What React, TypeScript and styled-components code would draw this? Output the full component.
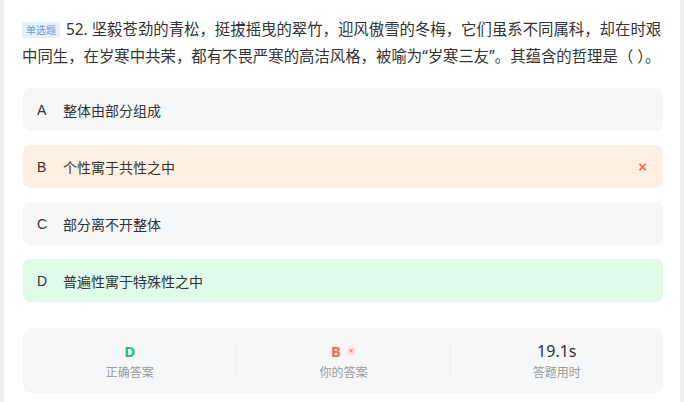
import React from 'react';
import styled, { createGlobalStyle } from 'styled-components';

const GlobalStyle = createGlobalStyle`
	html, body {
		margin: 0;
		padding: 0;
		background: #efeff0;
	}
	body {
		font-family: "Noto Sans CJK SC", "Noto Sans", sans-serif;
		color: #333;
	}
`;

const Page = styled.div`
	margin: 0 4px 0 4px;
	height: 402px;
	background: #fff;
	overflow: hidden;
	display: flex;
	flex-direction: column;
`;

const Header = styled.div`
	height: 20px;
	margin-top: -18px;
	display: flex;
	align-items: center;
	justify-content: space-between;
	padding: 0 20px 0 22px;
	font-size: 14px;
	color: #555;
`;

const HeaderIcons = styled.div`
	display: flex;
	gap: 22px;
`;

const HeaderIcon = styled.span`
	width: 12px;
	height: 12px;
	background: #999;
	border-radius: 2px;
`;

const Question = styled.div`
	margin-top: 14px;
	padding: 0 8px 0 18px;
	font-family: "Noto Sans", "Noto Sans CJK SC", sans-serif;
	font-size: 15.4px;
	line-height: 27px;
	color: #333;
`;

const Tag = styled.span`
	display: inline-block;
	background: #e5f2fd;
	color: #6b9bd0;
	font-family: "Noto Sans CJK SC", sans-serif;
	font-size: 10px;
	line-height: 16px;
	padding: 0 4px;
	border-radius: 2px;
	margin-right: 6px;
	vertical-align: 1px;
`;

const Options = styled.div`
	margin-top: 18px;
	padding: 0 17px 0 19px;
	display: flex;
	flex-direction: column;
	gap: 14px;
`;

const tones = {
	plain: '#f6f7f9',
	wrong: '#fff0e1',
	right: '#dffbe9',
};

const Option = styled.div<{ $tone: keyof typeof tones }>`
	height: 43px;
	border-radius: 7px;
	background: ${(p) => tones[p.$tone]};
	display: flex;
	align-items: center;
	padding: 0 16px 0 14px;
	font-size: 14px;
	color: #333;
`;

const Letter = styled.span`
	width: 26px;
	font-family: "Liberation Sans", "Noto Sans", sans-serif;
	font-size: 14px;
	color: #333;
`;

const OptionText = styled.span`
	flex: 1;
`;

const WrongMark = styled.span`
	color: #ff6a4d;
	font-size: 15px;
	font-weight: bold;
	font-family: "Liberation Sans", sans-serif;
`;

const Stats = styled.div`
	margin: 26px 17px 0 19px;
	height: 65px;
	border-radius: 8px;
	background: #f6f7f9;
	display: grid;
	grid-template-columns: 1fr 1fr 1fr;
	align-items: center;
`;

const Stat = styled.div<{ $divider?: boolean }>`
	display: flex;
	flex-direction: column;
	align-items: center;
	gap: 3px;
	border-left: ${(p) => (p.$divider ? '1px solid #eef0f2' : 'none')};
`;

const StatValue = styled.div<{ $color: string; $bold?: boolean }>`
	display: flex;
	align-items: center;
	gap: 5px;
	height: 20px;
	font-family: "Noto Sans", sans-serif;
	font-size: ${(p) => (p.$bold ? '15px' : '16px')};
	font-weight: ${(p) => (p.$bold ? 700 : 400)};
	color: ${(p) => p.$color};
`;

const SmallX = styled.span`
	width: 10px;
	height: 10px;
	border-radius: 50%;
	background: #ffe6e0;
	color: #ff8468;
	font-size: 9px;
	line-height: 10px;
	text-align: center;
	font-weight: 700;
`;

const StatLabel = styled.div`
	font-size: 12px;
	color: #9a9a9a;
	line-height: 16px;
`;

const options = [
	{ key: 'A', text: '整体由部分组成', tone: 'plain' as const },
	{ key: 'B', text: '个性寓于共性之中', tone: 'wrong' as const },
	{ key: 'C', text: '部分离不开整体', tone: 'plain' as const },
	{ key: 'D', text: '普遍性寓于特殊性之中', tone: 'right' as const },
];

export default function App() {
	return (
		<>
			<GlobalStyle />
			<Page>
				<Header>
					<span>← 错题解析</span>
					<HeaderIcons>
						<HeaderIcon />
						<HeaderIcon />
					</HeaderIcons>
				</Header>

				<Question>
					<Tag>单选题</Tag>
					52. 坚毅苍劲的青松，挺拔摇曳的翠竹，迎风傲雪的冬梅，它们虽系不同属科，却在时艰中同生，在岁寒中共荣，都有不畏严寒的高洁风格，被喻为“岁寒三友”。其蕴含的哲理是（ ）。
				</Question>

				<Options>
					{options.map((o) => (
						<Option key={o.key} $tone={o.tone}>
							<Letter>{o.key}</Letter>
							<OptionText>{o.text}</OptionText>
							{o.tone === 'wrong' && <WrongMark>×</WrongMark>}
						</Option>
					))}
				</Options>

				<Stats>
					<Stat>
						<StatValue $color="#25c27a" $bold>D</StatValue>
						<StatLabel>正确答案</StatLabel>
					</Stat>
					<Stat $divider>
						<StatValue $color="#ff6a4d" $bold>
							B<SmallX>×</SmallX>
						</StatValue>
						<StatLabel>你的答案</StatLabel>
					</Stat>
					<Stat $divider>
						<StatValue $color="#333">19.1s</StatValue>
						<StatLabel>答题用时</StatLabel>
					</Stat>
				</Stats>
			</Page>
		</>
	);
}
